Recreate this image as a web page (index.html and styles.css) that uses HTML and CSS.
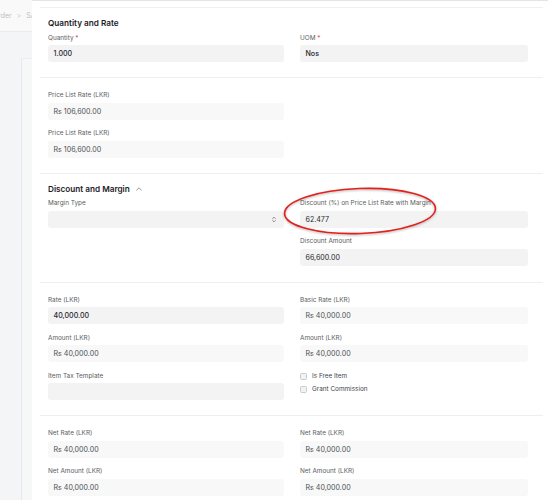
FILE: index.html
```html
<!DOCTYPE html>
<html lang="en">
<head>
    <meta charset="UTF-8">
    <meta name="viewport" content="width=device-width, initial-scale=1.0">
    <title>Sales Order Item</title>
    <link rel="stylesheet" href="styles.css">
</head>
<body>

<div class="page">
    <aside class="sidebar">
        <div class="crumbs"><span class="trail">Sales Order <span class="sep">&gt;</span> SA</span></div>
        <div class="side-body">
            <div class="side-card"></div>
        </div>
    </aside>

    <main class="dialog">
        <section class="section with-head">
            <h3>Quantity and Rate</h3>
            <div class="cols">
                <div class="col">
                    <div class="field">
                        <label>Quantity <span class="req">*</span></label>
                        <div class="control strong">1.000</div>
                    </div>
                </div>
                <div class="col">
                    <div class="field">
                        <label>UOM <span class="req">*</span></label>
                        <div class="control strong">Nos</div>
                    </div>
                </div>
            </div>
        </section>

        <section class="section">
            <div class="cols">
                <div class="col">
                    <div class="field">
                        <label>Price List Rate (LKR)</label>
                        <div class="control readonly">Rs 106,600.00</div>
                    </div>
                    <div class="field">
                        <label>Price List Rate (LKR)</label>
                        <div class="control readonly">Rs 106,600.00</div>
                    </div>
                </div>
                <div class="col"></div>
            </div>
        </section>

        <section class="section with-head tall">
            <h3>Discount and Margin
                <svg class="collapse" viewBox="0 0 10 6" width="6" height="4"><path d="M1 5 L5 1 L9 5" fill="none" stroke="#7c7c7c" stroke-width="1.3" stroke-linecap="round" stroke-linejoin="round"/></svg>
            </h3>
            <div class="cols">
                <div class="col">
                    <div class="field">
                        <label>Margin Type</label>
                        <div class="control select">
                            <svg class="updown" viewBox="0 0 6 10" width="4" height="7"><path d="M1 3.5 L3 1.5 L5 3.5 M1 6.5 L3 8.5 L5 6.5" fill="none" stroke="#555" stroke-width="1" stroke-linecap="round" stroke-linejoin="round"/></svg>
                        </div>
                    </div>
                </div>
                <div class="col">
                    <div class="field">
                        <label>Discount (%) on Price List Rate with Margin</label>
                        <div class="control">62.477</div>
                    </div>
                    <div class="field">
                        <label>Discount Amount</label>
                        <div class="control">66,600.00</div>
                    </div>
                </div>
            </div>
        </section>

        <section class="section">
            <div class="cols">
                <div class="col">
                    <div class="field">
                        <label>Rate (LKR)</label>
                        <div class="control strong">40,000.00</div>
                    </div>
                    <div class="field">
                        <label>Amount (LKR)</label>
                        <div class="control readonly">Rs 40,000.00</div>
                    </div>
                    <div class="field">
                        <label>Item Tax Template</label>
                        <div class="control"></div>
                    </div>
                </div>
                <div class="col">
                    <div class="field">
                        <label>Basic Rate (LKR)</label>
                        <div class="control readonly">Rs 40,000.00</div>
                    </div>
                    <div class="field">
                        <label>Amount (LKR)</label>
                        <div class="control readonly">Rs 40,000.00</div>
                    </div>
                    <div class="checks">
                        <div class="check"><span class="box"></span>Is Free Item</div>
                        <div class="check"><span class="box"></span>Grant Commission</div>
                    </div>
                </div>
            </div>
        </section>

        <section class="section">
            <div class="cols">
                <div class="col">
                    <div class="field">
                        <label>Net Rate (LKR)</label>
                        <div class="control readonly">Rs 40,000.00</div>
                    </div>
                    <div class="field">
                        <label>Net Amount (LKR)</label>
                        <div class="control readonly">Rs 40,000.00</div>
                    </div>
                </div>
                <div class="col">
                    <div class="field">
                        <label>Net Rate (LKR)</label>
                        <div class="control readonly">Rs 40,000.00</div>
                    </div>
                    <div class="field">
                        <label>Net Amount (LKR)</label>
                        <div class="control readonly">Rs 40,000.00</div>
                    </div>
                </div>
            </div>
        </section>

        <!-- red marker drawn over the screenshot -->
        <svg class="highlight" viewBox="0 0 160 56" width="160" height="56">
            <ellipse cx="80" cy="28" rx="75.5" ry="22.5" fill="none" stroke="#e3201b" stroke-width="1.6" transform="rotate(-2 80 28)"/>
        </svg>
    </main>
</div>

</body>
</html>
```

FILE: styles.css
```css
body {
    margin: 0;
    font-family: Inter, 'Noto Sans', sans-serif;
    background-color: #f4f5f6;
    color: #1f272e;
    overflow: hidden;
}
.page {
    display: flex;
    min-height: 500px;
}
.sidebar {
    width: 32px;
    flex-shrink: 0;
    overflow: hidden;
    display: flex;
    flex-direction: column;
}
.crumbs {
    height: 31px;
    line-height: 31px;
    white-space: nowrap;
    font-size: 7px;
    color: #b9bec3;
    background-color: #f9f9f9;
    border-bottom: 1px solid #ebebeb;
}
.trail {
    display: inline-block;
    margin-left: -27px;
}
.crumbs .sep {
    margin: 0 3px;
    color: #c9cdd1;
}
.side-body {
    flex: 1;
    display: flex;
    padding-left: 21px;
}
.side-card {
    flex: 1;
    border-left: 1px solid #e8e9ea;
    border-top: 1px solid #eceded;
    margin-top: 26px;
    background-color: #f6f7f7;
}
.dialog {
    position: relative;
    flex: 1;
    background-color: #fff;
    border-top: 1px solid #e4e4e4;
    padding: 6px 5px 0 8px;
}
.section {
    border-top: 1px solid #efefef;
    padding: 13px 0 15px 8px;
}
.section.with-head {
    padding-top: 9px;
}
.section.tall {
    padding-bottom: 16px;
}
h3 {
    margin: 0 0 4.5px;
    font-size: 8.2px;
    font-weight: 600;
    line-height: 12px;
    color: #1c2126;
    display: flex;
    align-items: center;
    gap: 6px;
}
.collapse {
    margin-top: 1px;
}
.cols {
    display: grid;
    grid-template-columns: 236px 228px;
    column-gap: 16px;
}
.col {
    display: flex;
    flex-direction: column;
    gap: 9.5px;
}
label {
    display: block;
    font-size: 6.4px;
    line-height: 9px;
    color: #5a5d60;
    margin-bottom: 2.5px;
}
.req {
    color: #e24c4c;
}
.control {
    height: 17px;
    line-height: 17px;
    padding: 0 5.5px;
    border-radius: 3px;
    background-color: #f3f3f3;
    font-size: 7.1px;
    color: #1f272e;
    position: relative;
}
.control.strong {
    font-weight: 500;
}
.control.readonly {
    background-color: #f8f8f8;
    color: #4c5157;
}
.updown {
    position: absolute;
    right: 8px;
    top: 5px;
}
.checks {
    display: flex;
    flex-direction: column;
    gap: 4px;
    padding-top: 0.5px;
}
.check {
    display: flex;
    align-items: center;
    gap: 5px;
    font-size: 6.4px;
    line-height: 9px;
    color: #41464b;
}
.check .box {
    width: 5px;
    height: 5px;
    border: 0.6px solid #c9cccf;
    border-radius: 1.5px;
    background-color: #f1f2f3;
}
.highlight {
    position: absolute;
    left: 248px;
    top: 182px;
    filter: drop-shadow(0 1px 1px rgba(0, 0, 0, 0.3));
}
```
